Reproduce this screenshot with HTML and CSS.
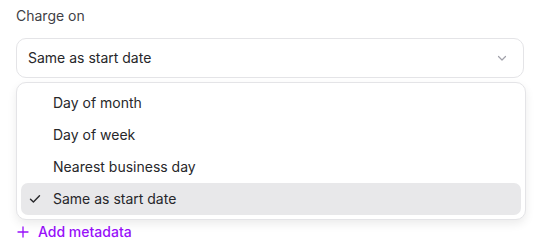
FILE: index.html
```html
<!DOCTYPE html>
<html lang="en">
<head>
  <meta charset="UTF-8" />
  <title>Charge on</title>
  <link rel="stylesheet" href="styles.css">
</head>
<body>
  <div class="field">
    <label class="label">Charge on</label>
    <div class="select-wrap">
      <button class="select">
        <span>Same as start date</span>
        <svg class="chevron" width="12" height="12" viewBox="0 0 12 12" fill="none">
          <path d="M2.5 4.5 6 8l3.5-3.5" stroke="#a1a1aa" stroke-width="1.2" stroke-linecap="round" stroke-linejoin="round"/>
        </svg>
      </button>
      <ul class="menu">
        <li class="option">Day of month</li>
        <li class="option">Day of week</li>
        <li class="option">Nearest business day</li>
        <li class="option selected">
          <svg class="check" width="12" height="12" viewBox="0 0 12 12" fill="none">
            <path d="M1.5 6.2 4.4 9 10.5 2.8" stroke="#27272a" stroke-width="1.4" stroke-linecap="round" stroke-linejoin="round"/>
          </svg>
          Same as start date
        </li>
      </ul>
    </div>
  </div>

  <a class="add-link" href="#">
    <svg width="12" height="12" viewBox="0 0 12 12" fill="none">
      <path d="M6 1v10M1 6h10" stroke="#9810fa" stroke-width="1.3" stroke-linecap="round"/>
    </svg>
    Add metadata
  </a>
</body>
</html>
```

FILE: styles.css
```css
body {
  font-family: Inter, "Noto Sans", sans-serif;
  font-size: 14px;
  line-height: 20px;
  color: #27272a;
  margin: 0;
  padding: 6px 16px;
  background: #fff;
}
.field {
  display: flex;
  flex-direction: column;
  gap: 12px;
  width: 508px;
}
.label {
  color: #3f3f46;
}
.select-wrap {
  position: relative;
}
.select {
  display: flex;
  align-items: center;
  justify-content: space-between;
  width: 100%;
  height: 40px;
  padding: 0 15px 0 11px;
  border: 1px solid #e4e4e7;
  border-radius: 10px;
  background: #fff;
  font: inherit;
  color: #27272a;
  box-sizing: border-box;
}
.menu {
  position: absolute;
  top: 44px;
  left: 0;
  width: 510px;
  box-sizing: border-box;
  margin: 0;
  padding: 4px;
  list-style: none;
  background: #fff;
  border: 1px solid #e4e4e7;
  border-radius: 10px;
  box-shadow: 0 4px 10px rgba(0, 0, 0, 0.08);
  z-index: 2;
}
.option {
  position: relative;
  height: 32px;
  display: flex;
  align-items: center;
  padding-left: 32px;
  border-radius: 7px;
}
.option.selected {
  background: #e8e8ea;
}
.check {
  position: absolute;
  left: 8px;
  top: 10px;
}
.add-link {
  display: flex;
  align-items: center;
  gap: 9px;
  margin-top: 144px;
  padding-left: 1px;
  color: #9810fa;
  font-weight: 500;
  text-decoration: none;
}
```
